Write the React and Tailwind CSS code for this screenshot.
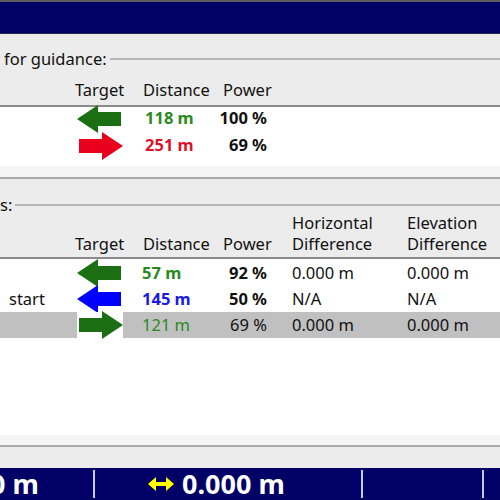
import React from "react"

const font = { fontFamily: '"Noto Sans", "Open Sans", sans-serif' }

function Arrow({ dir = "left", color }) {
    const pts = dir === "left"
        ? "0,14 21,0 21,7 44,7 44,21 21,21 21,28"
        : "46,14 25,0 25,7 2,7 2,21 25,21 25,28"
    return (
        <svg width="46" height="28" viewBox="0 0 46 28">
            <polygon points={pts} fill={color} />
        </svg>
    )
}

function GroupLabel({ text }) {
    return (
        <div className="flex items-center h-[22px] shrink-0">
            <span className="text-[16.5px] text-[#111] pl-[4px] pr-[3px] whitespace-nowrap">{text}</span>
            <div className="flex-1 h-[2px] bg-[#b4b4b4]"></div>
        </div>
    )
}

function Row({ label, arrow, dist, distColor, bold, power, h, e, selected }) {
    const rowBg = selected ? "bg-[#c0c0c0]" : "bg-white"
    const weight = bold ? "font-bold" : "font-normal"
    return (
        <div className="flex h-[26px] items-center text-[16.5px] text-[#111]">
            <div className={`w-[77px] h-full flex items-center pl-[9px] whitespace-nowrap ${rowBg}`}>{label}</div>
            <div className="w-[46px] h-full flex items-center justify-center bg-white">{arrow}</div>
            <div className={`flex-1 h-full flex items-center ${rowBg}`}>
                <div className={`w-[93px] pl-[19px] ${weight}`} style={{ color: distColor }}>{dist}</div>
                <div className={`w-[51px] text-right ${weight}`}>{power}</div>
                <div className="w-[118px] pl-[25px]">{h}</div>
                <div className="flex-1 pl-[22px]">{e}</div>
            </div>
        </div>
    )
}

export default function App() {
    return (
        <div className="w-[500px] h-[500px] overflow-hidden bg-[#ececec] flex flex-col" style={font}>
            <div className="h-[2px] bg-[#5c5c5c]"></div>
            <div className="h-[32px] bg-[#000066] border-b border-[#2a2a50]"></div>

            <div className="h-[71px] flex flex-col pt-[14px]">
                <GroupLabel text="for guidance:" />
                <div className="flex items-end flex-1 pb-[2px] text-[16.5px] text-[#111]">
                    <div className="w-[75px]"></div>
                    <div className="w-[68px]">Target</div>
                    <div className="w-[80px]">Distance</div>
                    <div>Power</div>
                </div>
            </div>

            <div className="h-[2px] bg-[#8a8a8a]"></div>
            <div className="h-[59px] bg-white flex flex-col">
                <div className="flex h-[27px] -mt-[2px] items-center text-[16.5px] text-[#111]">
                    <div className="w-[77px]"></div>
                    <div className="w-[46px] flex justify-center"><Arrow dir="left" color="#1c6e12" /></div>
                    <div className="w-[95px] pl-[22px] font-bold text-[#2a8a22]">118 m</div>
                    <div className="w-[49px] text-right font-bold">100 %</div>
                </div>
                <div className="flex h-[27px] items-center text-[16.5px] text-[#111]">
                    <div className="w-[77px]"></div>
                    <div className="w-[46px] flex justify-center"><Arrow dir="right" color="#e8001c" /></div>
                    <div className="w-[95px] pl-[22px] font-bold text-[#e0102a]">251 m</div>
                    <div className="w-[49px] text-right font-bold">69 %</div>
                </div>
            </div>
            <div className="h-[11px] bg-[#f5f5f5]"></div>
            <div className="h-[2px] bg-[#a8a8a8]"></div>

            <div className="h-[78px] flex flex-col pt-[15px]">
                <div className="-ml-[4px]"><GroupLabel text="s:" /></div>
                <div className="flex items-end -mt-[4px] text-[16.5px] text-[#111] leading-[21px]">
                    <div className="w-[75px]"></div>
                    <div className="w-[68px]">Target</div>
                    <div className="w-[80px]">Distance</div>
                    <div className="w-[69px]">Power</div>
                    <div className="w-[115px]">Horizontal<br />Difference</div>
                    <div>Elevation<br />Difference</div>
                </div>
            </div>

            <div className="h-[2px] bg-[#8a8a8a]"></div>
            <div className="h-[176px] bg-white flex flex-col pt-[1px]">
                <Row label="" arrow={<Arrow dir="left" color="#1c6e12" />} dist="57 m" distColor="#2a8a22" bold power="92 %" h="0.000 m" e="0.000 m" />
                <Row label="start" arrow={<Arrow dir="left" color="#0000ff" />} dist="145 m" distColor="#1a1ae6" bold power="50 %" h="N/A" e="N/A" />
                <Row label="" arrow={<Arrow dir="right" color="#1c6e12" />} dist="121 m" distColor="#2a8a22" power="69 %" h="0.000 m" e="0.000 m" selected />
            </div>
            <div className="h-[10px] bg-[#f5f5f5]"></div>
            <div className="h-[2px] bg-[#a8a8a8]"></div>
            <div className="flex-1"></div>

            <div className="h-[32px] bg-[#000066] flex items-center text-white font-bold text-[27px] leading-[26px]">
                <div className="w-[103px] flex items-center -ml-[10px] whitespace-nowrap">0 m</div>
                <div className="w-[2px] h-[28px] bg-[#c8c8e8]"></div>
                <div className="w-[266px] flex items-center pl-[53px] gap-[8px] whitespace-nowrap">
                    <svg width="26" height="14" viewBox="0 0 26 14">
                        <polygon points="0,7 8,0 8,5 18,5 18,0 26,7 18,14 18,9 8,9 8,14" fill="#ffff00" />
                    </svg>
                    <span>0.000 m</span>
                </div>
                <div className="w-[2px] h-[28px] bg-[#c8c8e8]"></div>
                <div className="w-[119px]"></div>
                <div className="w-[2px] h-[28px] bg-[#c8c8e8]"></div>
            </div>
        </div>
    )
}
